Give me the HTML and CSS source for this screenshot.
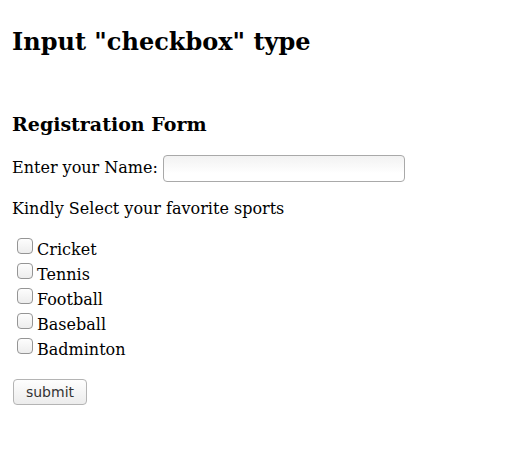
FILE: index.html
```html
<!DOCTYPE html>
<html>
<head>
<meta charset="utf-8">
<link rel="stylesheet" href="styles.css">
</head>
<body>
<h2 class="title">Input "checkbox" type</h2>
<form class="form">
<h3 class="form-title">Registration Form</h3>
<p class="row name-row">Enter your Name: <input class="name" type="text"></p>
<p class="row kindly">Kindly Select your favorite sports</p>
<div class="sports">
<label class="sport"><input class="cb" type="checkbox">Cricket</label>
<label class="sport"><input class="cb" type="checkbox">Tennis</label>
<label class="sport"><input class="cb" type="checkbox">Football</label>
<label class="sport"><input class="cb" type="checkbox">Baseball</label>
<label class="sport"><input class="cb" type="checkbox">Badminton</label>
</div>
<div class="submit-row"><input class="submit" type="submit" value="submit"></div>
</form>
</body>
</html>
```
FILE: styles.css
```css
body {
  margin: 8px 12px 0;
  font-family: "DejaVu Serif", serif;
  font-size: 16px;
  line-height: 19px;
  color: #000;
  background: #fff;
}
.title { font-size: 24px; line-height: 28px; margin: 20px 0 0; }
.form-title { font-size: 19px; line-height: 22px; margin: 57px 0 0; }
.row { margin: 0; }
.name-row { margin-top: 20px; }
.kindly { margin-top: 17px; }
.sports { margin-top: 19px; }
.sport { display: block; line-height: 25px; }
.cb {
  appearance: none;
  display: inline-block;
  width: 16px; height: 16px;
  margin: 0 4px 1px 5px;
  border: 1px solid #959595;
  border-radius: 4px;
  background: linear-gradient(#fdfdfd, #ededed);
  box-sizing: border-box;
  vertical-align: baseline;
}
.name {
  width: 242px; height: 27px; box-sizing: border-box;
  margin: 0;
  border: 1px solid #a9a9a9; border-radius: 4px;
  background: linear-gradient(#f2f2f2, #fff 70%);
  vertical-align: middle;
}
.submit-row { margin-top: 17px; }
.submit {
  display: block;
  margin: 0 0 0 1px;
  font-family: "DejaVu Sans", sans-serif; font-size: 14px; color: #333;
  width: 74px; height: 26px; padding: 0;
  border: 1px solid #b4b4b4; border-radius: 4px;
  background: linear-gradient(#fefefe, #ececec);
}
```
